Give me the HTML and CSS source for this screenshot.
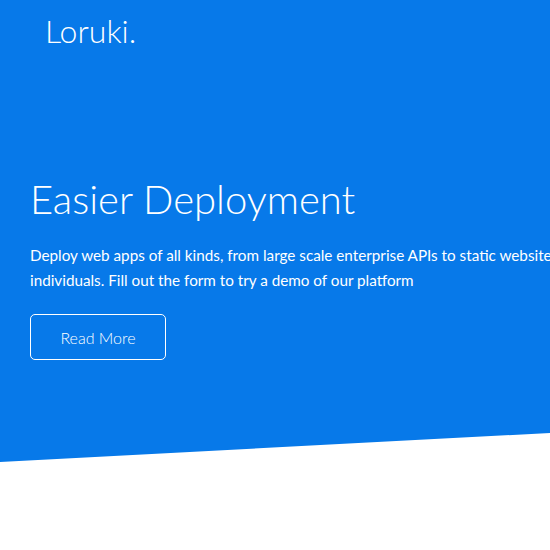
FILE: index.html
```html
<!DOCTYPE html>
<html lang="en">
<head>
<meta charset="utf-8">
<title>Loruki</title>
<link rel="stylesheet" href="styles.css">
</head>
<body>
  <header class="showcase">
    <nav class="navbar">
      <h1 class="logo">Loruki.</h1>
    </nav>
    <div class="showcase-text">
      <h2 class="title">Easier Deployment</h2>
      <p class="lead">Deploy web apps of all kinds, from large scale enterprise APIs to static websites for individuals. Fill out the form to try a demo of our platform</p>
      <a href="#" class="btn">Read More</a>
    </div>
  </header>
</body>
</html>
```

FILE: styles.css
```css
* {
  box-sizing: border-box;
  margin: 0;
  padding: 0;
}

html, body {
  overflow: hidden;
}

body {
  font-family: Lato, "Open Sans", sans-serif;
  background: #fff;
  color: #fff;
  width: 550px;
  height: 550px;
}

.showcase {
  background: #0779e9;
  height: 462px;
  clip-path: polygon(0 0, 100% 0, 100% 433px, 0 462px);
  display: flex;
  flex-direction: column;
}

.navbar {
  padding: 11px 45px 0;
}

.logo {
  font-weight: 300;
  font-size: 32px;
  line-height: 40px;
}

.showcase-text {
  padding: 124px 0 0 30px;
  width: 640px;
}

.title {
  font-weight: 300;
  font-size: 40px;
  line-height: 48px;
}

.lead {
  font-size: 15.25px;
  font-weight: 400;
  line-height: 25px;
  margin-top: 20px;
  width: 570px;
}

.btn {
  display: inline-flex;
  align-items: center;
  justify-content: center;
  margin-top: 21px;
  width: 136px;
  height: 46px;
  border: 1px solid #fff;
  border-radius: 5px;
  color: #fff;
  text-decoration: none;
  font-size: 16px;
  font-weight: 300;
}
```
